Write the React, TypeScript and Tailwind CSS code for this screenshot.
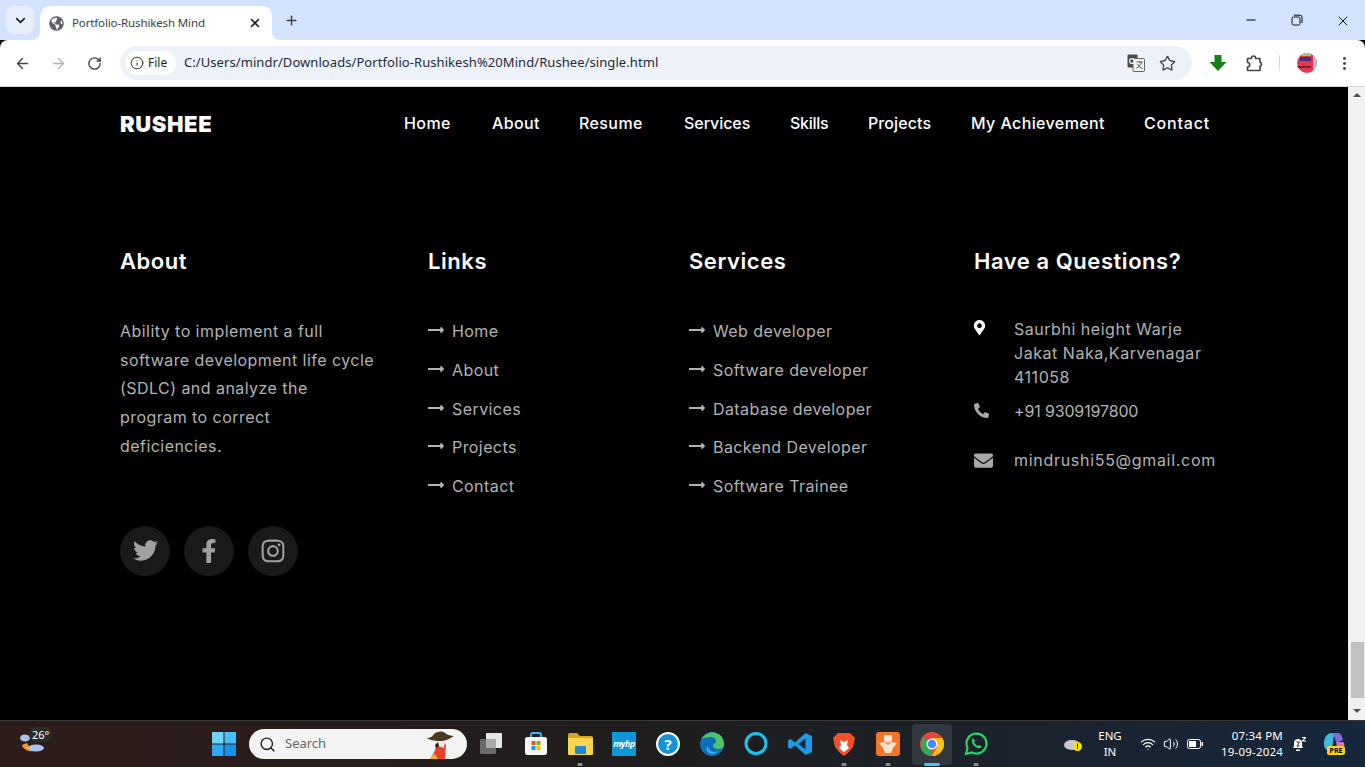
import React from "react";
import { ArrowLeft, ArrowRight, RotateCw, Info, Star, X, Plus, ChevronDown, Minus, Search, EllipsisVertical, Wifi, Volume2 } from "lucide-react";
import { FaTwitter, FaFacebookF, FaInstagram, FaMapMarkerAlt, FaPhoneAlt, FaEnvelope, FaGlobeAmericas } from "react-icons/fa";

const FONT = "font-['Inter','Liberation_Sans',sans-serif]";

const NAV: [string, string][] = [
  ["Home", "w-[88px] tracking-[0.4px]"],
  ["About", "w-[87px] tracking-[0.35px]"],
  ["Resume", "w-[105px] tracking-[0.4px]"],
  ["Services", "w-[106px] tracking-[-0.05px]"],
  ["Skills", "w-[78px] tracking-[-0.3px]"],
  ["Projects", "w-[103px] tracking-[0.1px]"],
  ["My Achievement", "w-[173px] tracking-[0.4px]"],
  ["Contact", "tracking-[0.8px]"],
];

function LongArrow() {
  return (
    <svg width="16" height="8" viewBox="0 0 16 8" className="shrink-0 -mt-[2px]" fill="none" stroke="#b3b3b3" strokeWidth="1.8">
      <path d="M0 4H15M12.500 1.500L15 4l-2.500 2.500" />
    </svg>
  );
}

function LinkList({ items }: { items: string[] }) {
  return (
    <ul className="flex flex-col mt-[35.7px]">
      {items.map((t) => (
        <li key={t} className="h-[38.75px] flex items-center gap-2 text-[#b3b3b3] text-[16px] tracking-[0.42px]">
          <LongArrow />
          <span>{t}</span>
        </li>
      ))}
    </ul>
  );
}

function Heading({ children }: { children: React.ReactNode }) {
  return <h2 className="text-white text-[22px] font-semibold leading-[30px] tracking-[0.55px]">{children}</h2>;
}

function Tile({ children, bar, active }: { children: React.ReactNode; bar?: boolean; active?: boolean }) {
  return (
    <div className="relative w-[44px] h-[47px] flex items-center justify-center">
      {active && <div className="absolute left-[2px] right-[2px] top-[3px] bottom-[3px] rounded bg-white/10" />}
      <div className="relative">{children}</div>
      {bar && <div className="absolute bottom-[2px] left-[17px] w-[10px] h-[3px] rounded-full bg-[#8a8a8a] scale-x-50" />}
      {active && <div className="absolute bottom-[2px] left-[14px] w-[16px] h-[3px] rounded-full bg-[#4fc3f7]" />}
    </div>
  );
}

export default function App() {
  return (
    <div className={`w-[1365px] h-[767px] flex flex-col overflow-hidden bg-black ${FONT}`}>
      {/* Tab strip */}
      <div className="h-10 bg-[#d3e3fd] flex items-end shrink-0 relative">
        <div className="ml-[6px] mb-[6px] w-[28px] h-[28px] rounded-lg bg-[#e6eefc] flex items-center justify-center">
          <ChevronDown size={15} strokeWidth={2.6} className="text-[#1f1f1f]" />
        </div>
        <div className="relative ml-[6px] w-[232px] h-[34px] bg-white rounded-t-[10px] flex items-center pl-[9px] pr-[10px] font-['Noto_Sans',sans-serif]">
          <svg width="8" height="8" viewBox="0 0 8 8" className="absolute -left-[8px] bottom-0"><path d="M8 0v8H0a8 8 0 0 0 8-8z" fill="#fff" /></svg>
          <svg width="8" height="8" viewBox="0 0 8 8" className="absolute -right-[8px] bottom-0"><path d="M0 0v8h8a8 8 0 0 1-8-8z" fill="#fff" /></svg>
          <FaGlobeAmericas size={15} className="text-[#5f6368] shrink-0" />
          <span className="ml-[8px] text-[11.5px] tracking-[-0.13px] text-[#3c4043] flex-1 whitespace-nowrap">Portfolio-Rushikesh Mind</span>
          <X size={14} strokeWidth={2.8} className="text-[#1f1f1f]" />
        </div>
        <div className="ml-[12px] mb-[12px]">
          <Plus size={15} strokeWidth={2.2} className="text-[#3c4043]" />
        </div>
        <div className="ml-auto -mr-px flex mb-[11px] text-black">
          <div className="w-[46px] flex justify-center"><Minus size={14} strokeWidth={1.7} /></div>
          <div className="w-[46px] flex justify-center">
            <svg width="12" height="12" viewBox="0 0 12 12" fill="none" stroke="#111" strokeWidth="1" className="mt-[1px]"><rect x="1" y="3" width="8" height="8" rx="1.5" /><path d="M3 1.200h6a2 2 0 0 1 2 2V9" /></svg>
          </div>
          <div className="w-[46px] flex justify-center"><X size={16} strokeWidth={1.4} /></div>
        </div>
      </div>
      {/* Toolbar */}
      <div className="h-[47px] bg-white shrink-0 flex items-center border-b border-[#d9d9d9] rounded-t-[8px] relative">
        <div className="w-[120px] flex items-center pl-[4px]">
          <div className="w-[36px] flex justify-center"><ArrowLeft size={17} strokeWidth={2} className="text-[#444746]" /></div>
          <div className="w-[36px] flex justify-center"><ArrowRight size={17} strokeWidth={2} className="text-[#b0b2b4]" /></div>
          <div className="w-[36px] flex justify-center"><RotateCw size={15} strokeWidth={2.2} className="text-[#444746]" /></div>
        </div>
        <div className="w-[1072px] h-[34px] rounded-full bg-[#edf2fa] flex items-center pl-[5px] pr-[16px] font-['Noto_Sans',sans-serif]">
          <div className="w-[51px] h-[24px] bg-white rounded-full flex items-center pl-[5px] gap-[4px] text-[12px] text-[#1f1f1f]">
            <Info size={14} strokeWidth={1.7} className="text-[#333]" />
            <span>File</span>
          </div>
          <span className="ml-[8px] text-[13px] text-[#1f2a3a] whitespace-nowrap tracking-[0.07px]">C:/Users/mindr/Downloads/Portfolio-Rushikesh%20Mind/Rushee/single.html</span>
          <div className="ml-auto flex items-center gap-[14px]">
            <svg width="18" height="18" viewBox="0 0 18 18"><rect x="0.5" y="0.5" width="10" height="13" rx="1" fill="#4a4a4a" /><rect x="6" y="4.5" width="11.5" height="13" rx="1" fill="#f2f2f2" stroke="#666" /><circle cx="5" cy="7" r="2.4" fill="none" stroke="#fff" strokeWidth="1.2" /><path d="M9.500 8h6M12.500 7v1M14.500 8c-.5 3-3 5-5 6M10.500 10c1 2 3 4 5 4.500" stroke="#555" strokeWidth="1" fill="none" /></svg>
            <Star size={17} strokeWidth={1.9} className="text-[#444746]" />
          </div>
        </div>
        <div className="ml-[17px]">
          <svg width="18" height="16" viewBox="0 0 18 16"><path d="M5.500 0h7v7H17.500L9 16 .5 7h5z" fill="#13801a" /></svg>
        </div>
        <svg width="17" height="17" viewBox="0 0 17 17" fill="none" stroke="#444746" strokeWidth="1.600" strokeLinejoin="round" className="ml-[19px]">
          <path d="M1.500 3.500h4V3a2 2 0 0 1 4 0v.5h4.500v4h.5a2 2 0 0 1 0 3.500H14v4.500H1.500v-3.500a2 2 0 0 0 0-4.500z" />
        </svg>
        <div className="ml-[16px] w-[1px] h-[16px] bg-[#c6dafc]" />
        <div className="ml-[17px] w-[20px] h-[20px] rounded-full bg-[#e8354e] relative overflow-hidden">
          <div className="absolute left-[5px] top-0 w-[9px] h-[3px] bg-[#9ccb7a]" />
          <div className="absolute left-[3px] top-[4px] w-[11px] h-[4px] bg-[#46327a]" />
          <div className="absolute right-0 top-[3px] w-[4px] h-[14px] bg-[#b9c0c4]" />
          <div className="absolute left-0 top-[13px] w-[14px] h-[2px] bg-[#7a1f30]" />
        </div>
        <EllipsisVertical size={17} strokeWidth={2.2} className="text-[#444746] ml-[19px]" />
      </div>
      {/* Page + scrollbar */}
      <div className="flex-1 flex min-h-0">
        <main className="flex-1 bg-black pl-[120px]">
          <nav className="h-[73px] flex items-start pt-[23px]">
            <div className="text-white font-black text-[22px] leading-[28px] tracking-[0.6px] w-[284px]">RUSHEE</div>
            <ul className="flex text-white text-[16px] font-medium leading-[26px]">
              {NAV.map(([t, c]) => (
                <li key={t} className={`whitespace-nowrap ${c}`}>{t}</li>
              ))}
            </ul>
          </nav>
          <div className="flex mt-[86px]">
            <section className="w-[308px]">
              <Heading>About</Heading>
              <p className="mt-[40.8px] w-[256px] text-[16px] leading-[28.8px] text-[#b3b3b3] tracking-[0.45px]">
                Ability to implement a full software development life cycle (SDLC) and analyze the program to correct deficiencies.
              </p>
              <div className="flex gap-[14px] mt-[65.2px]">
                <div className="w-[50px] h-[50px] rounded-full bg-[#1a1a1a] flex items-center justify-center text-[#a0a0a0]"><FaTwitter size={25} /></div>
                <div className="w-[50px] h-[50px] rounded-full bg-[#1a1a1a] flex items-center justify-center text-[#a0a0a0]"><FaFacebookF size={24} /></div>
                <div className="w-[50px] h-[50px] rounded-full bg-[#1a1a1a] flex items-center justify-center text-[#a0a0a0]"><FaInstagram size={26} /></div>
              </div>
            </section>
            <section className="w-[261px]">
              <Heading>Links</Heading>
              <LinkList items={["Home", "About", "Services", "Projects", "Contact"]} />
            </section>
            <section className="w-[285px]">
              <Heading>Services</Heading>
              <LinkList items={["Web developer", "Software developer", "Database developer", "Backend Developer", "Software Trainee"]} />
            </section>
            <section className="w-[250px]">
              <Heading>Have a Questions?</Heading>
              <div className="mt-[41px] text-[16px] leading-[24px] text-[#b3b3b3]">
                <div className="flex">
                  <div className="w-[40px] pt-[3px] -ml-[2px] mr-[2px] text-white"><FaMapMarkerAlt size={15} /></div>
                  <div className="w-[205px] tracking-[0.53px]">Saurbhi height Warje<br />Jakat Naka,Karvenagar<br />411058</div>
                </div>
                <div className="flex mt-[10px]">
                  <div className="w-[40px] pt-[4px]"><FaPhoneAlt size={15} className="-scale-x-100 rotate-90 text-[#a8a8a8]" /></div>
                  <div className="tracking-[-0.15px]">+91 9309197800</div>
                </div>
                <div className="flex mt-[25px]">
                  <div className="w-[40px] pt-[3px] text-[#a8a8a8]"><FaEnvelope size={19} /></div>
                  <div className="tracking-[0.7px]">mindrushi55@gmail.com</div>
                </div>
              </div>
            </section>
          </div>
        </main>
        <div className="w-[17px] bg-[#f1f1f1] flex flex-col items-center shrink-0">
          <div className="mt-[6px] w-0 h-0 border-l-[4px] border-r-[4px] border-b-[4px] border-l-transparent border-r-transparent border-b-[#505050]" />
          <div className="mt-[545px] ml-[2px] w-[13px] h-[56px] bg-[#c1c1c1]" />
          <div className="mt-[11px] w-0 h-0 border-l-[4px] border-r-[4px] border-t-[4px] border-l-transparent border-r-transparent border-t-[#505050]" />
        </div>
      </div>
      {/* Taskbar */}
      <div className="h-[47px] shrink-0 flex items-center border-t border-[#3a3a3a] bg-gradient-to-r from-[#2f1c1a] via-[#1e1d1e] to-[#16283c] font-['Noto_Sans',sans-serif] text-white">
        <div className="w-[212px] pl-[20px] relative h-full flex items-center">
          <svg width="28" height="28" viewBox="0 0 28 28">
            <path d="M2 15c1 6 12 9 17 3-5 1-10 0-12-5z" fill="#f09a2e" />
            <ellipse cx="16" cy="18" rx="8" ry="3.500" fill="#a9c4ec" />
            <ellipse cx="5" cy="8" rx="5" ry="3.500" fill="#a9c4ec" />
          </svg>
          <div className="absolute left-[29px] top-[6px] rounded-full bg-[#2c2c2c] px-[3px] text-[11px] leading-[15px]">26°</div>
        </div>
        <svg width="24" height="24" viewBox="0 0 24 24" className="shrink-0">
          <rect x="0" y="0" width="11.500" height="11.500" fill="#6fd3fb" />
          <rect x="12.500" y="0" width="11.500" height="11.500" fill="#45bff8" />
          <rect x="0" y="12.500" width="11.500" height="11.500" fill="#2aaaf5" />
          <rect x="12.500" y="12.500" width="11.500" height="11.500" fill="#1493ee" />
        </svg>
        <div className="ml-[13px] w-[218px] h-[30px] rounded-full bg-[#f3f3f3] flex items-center pl-[10px] pr-[12px] shrink-0">
          <Search size={17} strokeWidth={2} className="text-[#222]" />
          <span className="ml-[9px] text-[13px] text-[#666] flex-1">Search</span>
          <svg width="28" height="28" viewBox="0 0 28 28" className="mt-[1px]">
            <path d="M3 28c1-3 4-5 5-9 1-4 3-9 8-9l3 4-1 14z" fill="#e8402a" />
            <path d="M3 28c1-3 3-4 5-5l3 5z" fill="#f4b41a" />
            <path d="M0 7c3 0 5-1 7-4 2-2 7-3 9-2 3 1 5 4 11 4-4 2-7 5-13 5-5 0-10 0-14-3z" fill="#4a3820" />
            <path d="M11 10h7l-1 7-6-2z" fill="#efe7d8" />
            <path d="M11 11l-3 3 1 3 3-2z" fill="#222" />
          </svg>
        </div>
        <div className="flex ml-[3px]">
          <Tile>
            <svg width="24" height="22" viewBox="0 0 24 22"><rect x="0" y="6" width="16" height="15" rx="1" fill="#6a6a6a" /><rect x="6" y="0" width="16" height="15" rx="1" fill="#e6e6e6" /><rect x="6" y="6" width="10" height="9" fill="#a9a9a9" /></svg>
          </Tile>
          <Tile>
            <svg width="24" height="24" viewBox="0 0 24 24"><path d="M7 6V3a2 2 0 0 1 2-2h6a2 2 0 0 1 2 2v3" fill="none" stroke="#34b6f3" strokeWidth="2" /><rect x="1" y="5" width="22" height="18" rx="2.500" fill="#f5f5f5" /><rect x="7.500" y="9" width="4" height="4" fill="#f25022" /><rect x="12.500" y="9" width="4" height="4" fill="#7fba00" /><rect x="7.500" y="14" width="4" height="4" fill="#00a4ef" /><rect x="12.500" y="14" width="4" height="4" fill="#ffb900" /></svg>
          </Tile>
          <Tile bar>
            <svg width="26" height="24" viewBox="0 0 26 24"><path d="M1 3a2 2 0 0 1 2-2h7l3 3h11a2 2 0 0 1 2 2v2H1z" fill="#d9a81f" /><rect x="1" y="6" width="25" height="17" rx="1" fill="#fbd54f" /><rect x="8" y="14" width="11" height="8" rx="1" fill="#1e88d6" /></svg>
          </Tile>
          <Tile>
            <div className="w-[24px] h-[24px] bg-[#0f96d6] flex items-center justify-center text-[9px] italic font-bold text-white tracking-[-0.5px]">myhp</div>
          </Tile>
          <Tile>
            <div className="w-[24px] h-[24px] rounded-full bg-[#1593d4] border-2 border-white flex items-center justify-center text-[15px] font-bold text-white">?</div>
          </Tile>
          <Tile>
            <svg width="24" height="24" viewBox="0 0 24 24"><circle cx="12" cy="12" r="12" fill="#0d6fb8" /><path d="M2 7C5 1 12-1 18 2c4 2 6 6 6 11 0 3-3 4-6 4-2 0-5-1-5-3 0-2 3-2 3-5 0-3-3-4-6-4S4 6 2 7z" fill="#4fc36a" /><path d="M8 13c0 4 3 7 7 7 2 0 4-1 5-2-3 4-10 6-13 1-1-2 0-4 1-6z" fill="#36a7e6" /></svg>
          </Tile>
          <Tile>
            <svg width="24" height="24" viewBox="0 0 24 24"><circle cx="12" cy="11.500" r="10" fill="none" stroke="#16c5f0" strokeWidth="3" /><path d="M9 20l3 4 3-4z" fill="#16c5f0" /></svg>
          </Tile>
          <Tile>
            <svg width="24" height="24" viewBox="0 0 24 24"><path d="M17.500 1L7 10.500 2.500 7 0 8.500v7L2.500 17 7 13.500 17.500 23l6.500-3V4z" fill="#2198e3" /><path d="M17.500 6.500L10.500 12l7 5.500z" fill="#0d2a44" /></svg>
          </Tile>
          <Tile bar>
            <svg width="22" height="24" viewBox="0 0 22 24"><path d="M5 1h12l3 3 2 2-2 9-5 6-4 3-4-3-5-6-2-9 2-2z" fill="#f1502a" /><path d="M7 8l4 2 4-2-1 5 2 3-5 4-5-4 2-3z" fill="#fff" /></svg>
          </Tile>
          <Tile bar>
            <div className="w-[24px] h-[24px] rounded-[3px] bg-[#f5762a] flex items-center justify-center">
              <svg width="18" height="20" viewBox="0 0 18 20"><path d="M5 1h8v6l-4 2-4-2zM0 9l6-1 3 3 3-3 6 1-4 5-2 5H6l-2-5z" fill="#fde3d0" /></svg>
            </div>
          </Tile>
          <Tile active>
            <svg width="24" height="24" viewBox="0 0 24 24"><circle cx="12" cy="12" r="12" fill="#e8453c" /><path d="M12 24A12 12 0 0 1 1.600 18L2 5l10 7z" fill="#34a853" /><path d="M12 6h10.400A12 12 0 0 1 12 24l5-9z" fill="#fbc116" /><circle cx="12" cy="12" r="5.500" fill="#fff" /><circle cx="12" cy="12" r="4.300" fill="#4a8af4" /></svg>
          </Tile>
          <Tile bar>
            <svg width="24" height="24" viewBox="0 0 24 24" fill="none"><path d="M2 22l1.500-6A10 10 0 1 1 8 20.500z" stroke="#25d366" strokeWidth="2.200" /><path d="M8 8c0-1 1-2 2-1l1 2-1 1c1 2 2 3 4 4l1-1 2 1c1 1 0 2-1 2-4 1-9-4-8-8z" fill="#25d366" /></svg>
          </Tile>
        </div>
        <div className="ml-[66px] relative w-[20px] h-[16px]">
          <svg width="20" height="16" viewBox="0 0 20 16"><ellipse cx="8" cy="9" rx="8" ry="5" fill="#c9c9c9" /><circle cx="13.500" cy="10.500" r="4.500" fill="#fce100" /><rect x="13" y="7.500" width="1" height="4" fill="#111" /><rect x="13" y="12" width="1" height="1" fill="#111" /></svg>
        </div>
        <div className="ml-[13px] w-[26px] text-center text-[11.5px] leading-[16px]">ENG<br />IN</div>
        <Wifi size={16} strokeWidth={1.8} className="ml-[17px]" />
        <Volume2 size={16} strokeWidth={1.5} className="ml-[7px]" />
        <svg width="16" height="10" viewBox="0 0 16 10" className="ml-[8px]" fill="none"><rect x=".5" y=".5" width="13" height="9" rx="2" stroke="#fff" /><rect x="2" y="2" width="7" height="6" fill="#fff" /><rect x="14.500" y="3" width="1.500" height="4" fill="#fff" /></svg>
        <div className="ml-[16px] w-[64px] text-right text-[11.5px] leading-[16px] tracking-[0.2px] whitespace-nowrap">07:34 PM<br />19-09-2024</div>
        <svg width="16" height="17" viewBox="0 0 16 17" className="ml-[8px]" fill="#fff">
          <path d="M2 12c1-1 1-3 1-5 0-3 2-4 4-4s4 1 4 4c0 2 0 4 1 5z" />
          <rect x="5" y="13.500" width="4" height="1.500" />
          <path d="M11 1h4v1l-2.500 2.500H15V5.500h-4v-1L13.500 2H11z" />
          <path d="M5.500 6h3L6 10h2.500" stroke="#1c2a3a" strokeWidth="1" fill="none" />
        </svg>
        <div className="ml-[15px] relative w-[24px] h-[24px]">
          <svg width="24" height="20" viewBox="0 0 24 20"><path d="M2 12C2 5 5 1 10 1h6c-3 0-5 4-5 9s-2 8-5 8c-2 0-4-2-4-6z" fill="#3fb8e0" /><path d="M10 1h6c3 0 4 3 5 7l-5 2c-2 0-3-1-3-4z" fill="#7f6be6" /><path d="M14 10h6c3 0 3 3 1 6l-9 2c3-2 3-5 2-8z" fill="#e56fc2" /></svg>
          <div className="absolute left-[5px] top-[14px] w-[18px] h-[9px] rounded-[2px] bg-[#fcd116] text-black text-[7px] leading-[9px] font-bold text-center">PRE</div>
        </div>
      </div>
    </div>
  );
}
